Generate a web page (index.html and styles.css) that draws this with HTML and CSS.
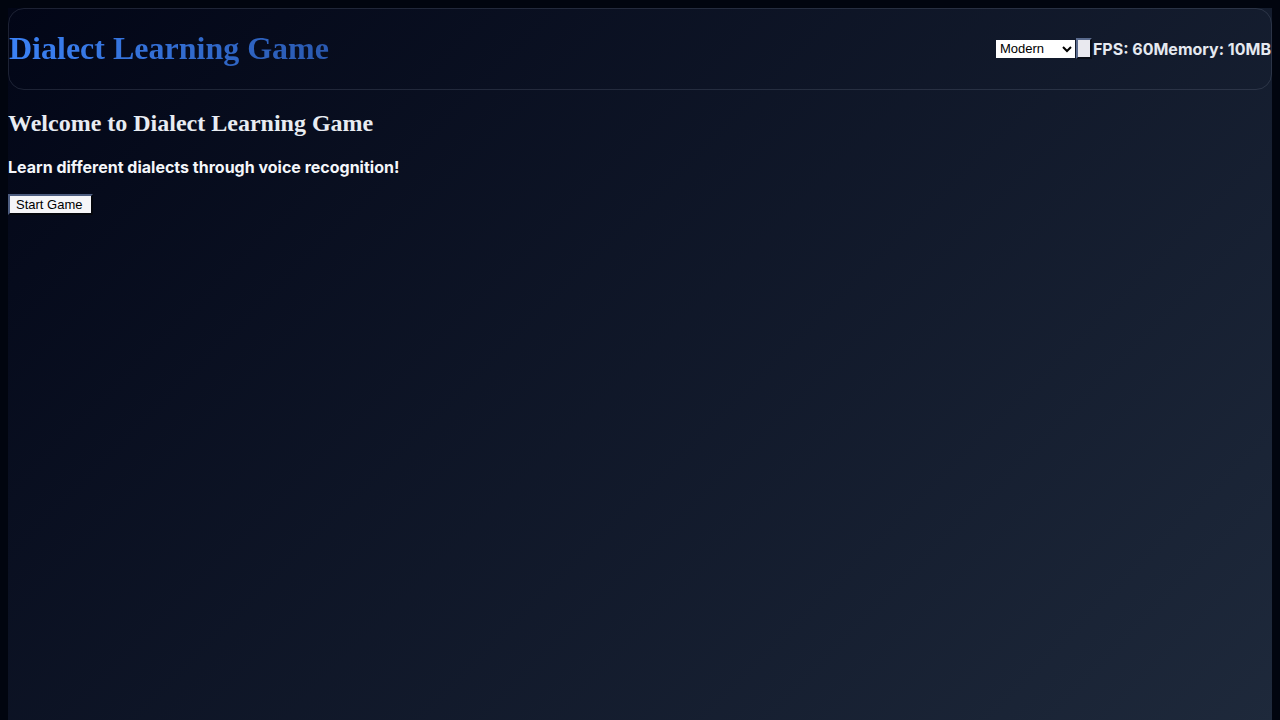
FILE: index.html
```html
<!DOCTYPE html>
<html lang="en">
<head>
<meta charset="utf-8">
<title>Dialect Learning Game</title>
<link rel="stylesheet" href="styles.css">
</head>
<body>
<div class="app">
  <header class="header">
    <h1 class="title">Dialect Learning Game</h1>
    <div class="controls">
      <select class="theme-select">
        <option>Modern</option>
        <option>Classic</option>
      </select>
      <button class="toggle" type="button"></button>
      <span class="stat">FPS: 60</span>
      <span class="stat">Memory: 10MB</span>
    </div>
  </header>
  <main class="welcome">
    <h2 class="welcome-title">Welcome to Dialect Learning Game</h2>
    <p class="welcome-text">Learn different dialects through voice recognition!</p>
    <button class="start-btn" type="button">Start Game</button>
  </main>
</div>
</body>
</html>
```
FILE: styles.css
```css
html, body {
  background: #01050f;
}
body {
  margin: 8px;
}
.app {
  min-height: 100vh;
  background: linear-gradient(135deg, #020617 0%, #1e293b 100%);
  color: #e2e8f0;
}
.header {
  display: flex;
  align-items: center;
  justify-content: space-between;
  border: 1px solid rgba(148, 163, 184, 0.18);
  border-radius: 16px;
}
.title {
  margin: 21.44px 0;
  font-family: "Liberation Serif", "Times New Roman", serif;
  font-size: 32px;
  font-weight: bold;
  background: linear-gradient(90deg, #3b82f6, #2a59b0);
  -webkit-background-clip: text;
  background-clip: text;
  color: transparent;
}
.controls {
  display: flex;
  align-items: center;
}
.theme-select {
  font-family: "Liberation Sans", Arial, sans-serif;
  font-size: 13px;
  height: 18px;
  width: 79px;
  padding: 0;
  border: 0;
  background: #ffffff;
  color: #000;
}
.toggle {
  box-sizing: border-box;
  width: 16px;
  height: 21px;
  padding: 0;
  margin: 0 1px;
  background: #e9e9ef;
  border-style: solid;
  border-width: 2px;
  border-color: #5a6b8e #0a0e18 #0a0e18 #5a6b8e;
}
.stat {
  font-family: Inter, "Noto Sans", sans-serif;
  font-size: 16px;
  font-weight: bold;
  color: #e5e9f0;
}
.welcome-title {
  margin: 19.92px 0;
  font-family: "Liberation Serif", "Times New Roman", serif;
  font-size: 24px;
  font-weight: bold;
  color: #e8ecf2;
}
.welcome-text {
  margin: 16px 0 17px;
  font-family: Inter, "Noto Sans", sans-serif;
  font-size: 16px;
  font-weight: bold;
  color: #f4f6fa;
}
.start-btn {
  font-family: "Liberation Sans", Arial, sans-serif;
  font-size: 13px;
  color: #000;
  background: #f5f5f8;
  padding: 1px 9px 1px 6px;
  border-style: solid;
  border-width: 2px;
  border-color: #4d5d80 #05070d #05070d #4d5d80;
}
```
